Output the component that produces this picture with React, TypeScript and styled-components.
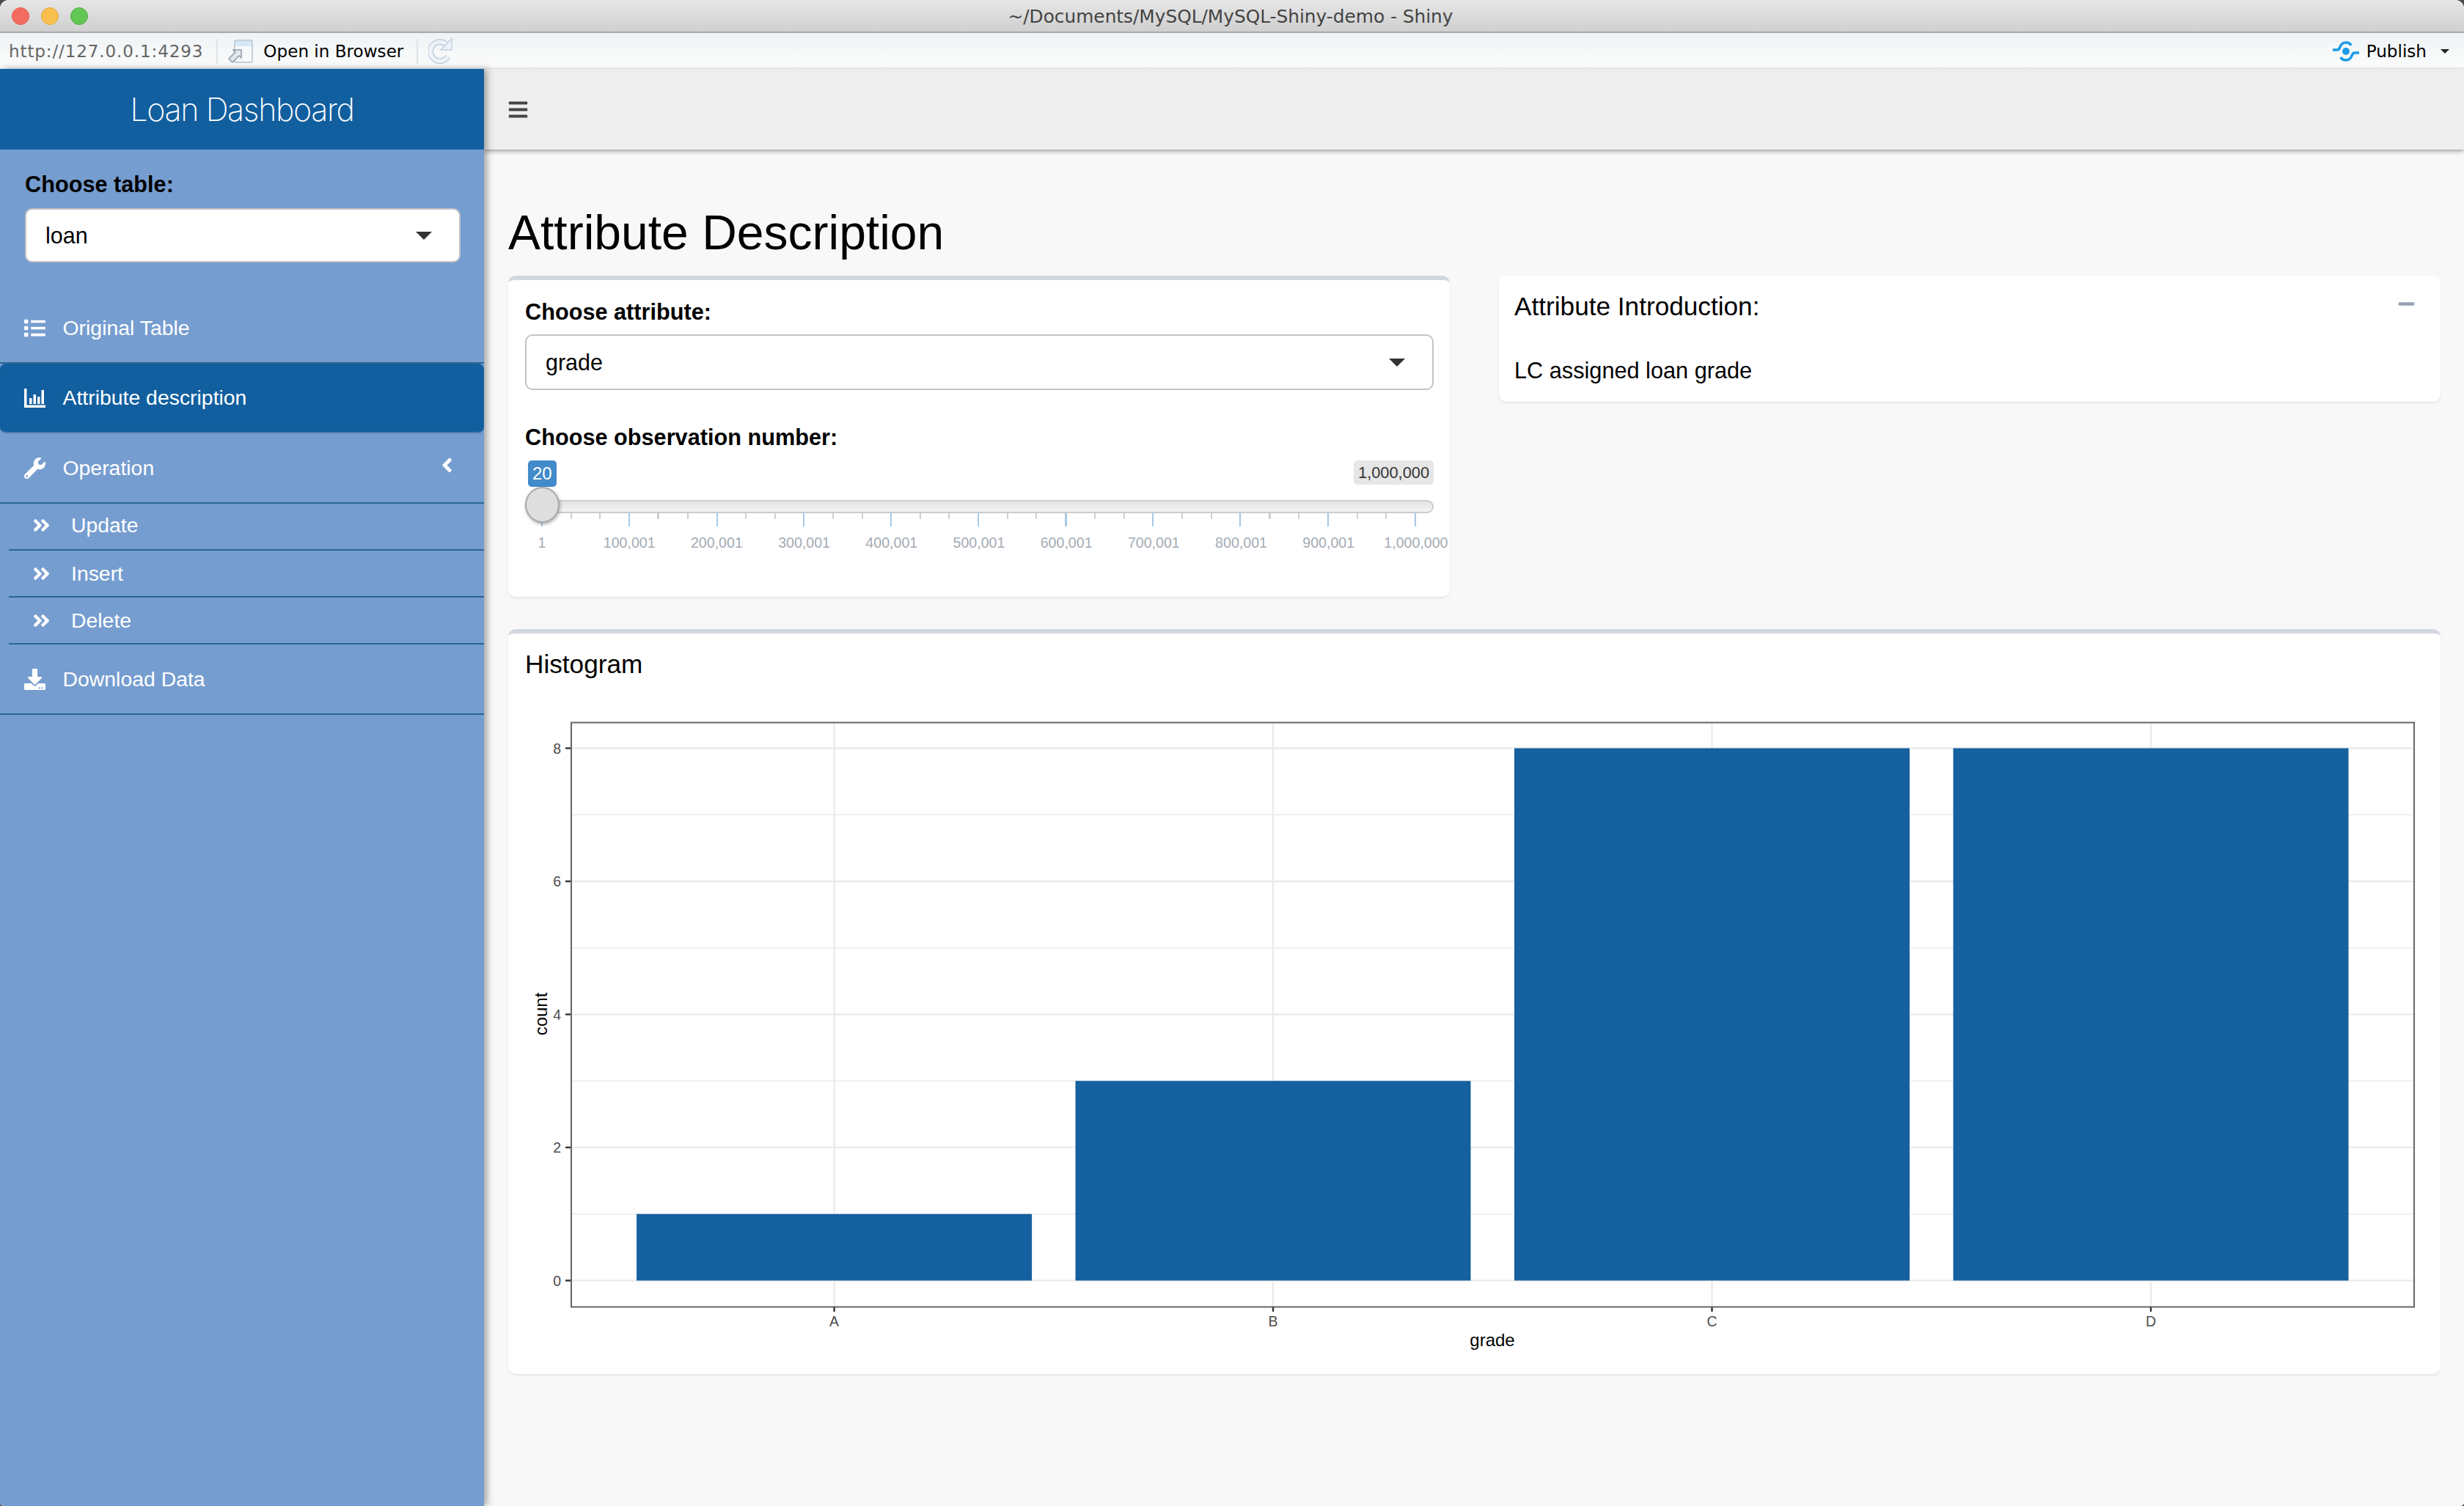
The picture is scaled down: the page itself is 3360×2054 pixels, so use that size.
import React from "react";
import styled, { createGlobalStyle } from "styled-components";
import {
  FaAngleDoubleRight,
  FaAngleLeft,
  FaBars,
  FaDownload,
  FaList,
  FaMinus,
  FaWrench,
} from "react-icons/fa";

const GlobalStyle = createGlobalStyle`
  html, body {
    margin: 0;
    padding: 0;
    background: #4a4a4a;
  }
  * {
    box-sizing: border-box;
  }
`;

const Window = styled.div`
  width: 3360px;
  height: 2054px;
  display: flex;
  flex-direction: column;
  overflow: hidden;
  border-radius: 12px 12px 5px 5px;
  background: #f8f8f8;
  font-family: "Liberation Sans", Arial, sans-serif;
  color: #000;
`;

const TitleBar = styled.div`
  height: 45px;
  flex: none;
  position: relative;
  display: flex;
  align-items: center;
  justify-content: center;
  padding: 1px 4px 0 0;
  background: linear-gradient(#e6e6e6, #cfcfcf);
  border-bottom: 2px solid #a8a8a8;
  font-family: "DejaVu Sans", sans-serif;
  font-size: 24.8px;
  color: #444;
`;

const Lights = styled.div`
  position: absolute;
  left: 16px;
  top: 10px;
  display: flex;
  gap: 16px;
`;

const Light = styled.span<{ $fill: string; $edge: string }>`
  width: 24px;
  height: 24px;
  border-radius: 50%;
  background: ${(p) => p.$fill};
  border: 1px solid ${(p) => p.$edge};
`;

const Toolbar = styled.div`
  height: 49px;
  flex: none;
  display: flex;
  align-items: center;
  padding: 1px 20px 0 12px;
  background: linear-gradient(#eff3f5, #fbfcfc 96%, #f2f2f2);
  font-family: "DejaVu Sans", sans-serif;
  font-size: 23.1px;
`;

const UrlText = styled.span`
  color: #666;
  letter-spacing: 0.85px;
`;

const ToolDivider = styled.span`
  width: 2px;
  height: 34px;
  margin: 0 14px 0 18px;
  background: #dfe3e5;
`;

const ToolSpacer = styled.div`
  flex: 1;
`;

const PublishText = styled.span`
  margin: 0 19px 0 10px;
`;

const SmallCaret = styled.span`
  width: 0;
  height: 0;
  border-left: 6px solid transparent;
  border-right: 6px solid transparent;
  border-top: 6px solid #222;
`;

const Body = styled.div`
  flex: 1;
  display: flex;
  min-height: 0;
`;

const Sidebar = styled.aside`
  width: 660px;
  flex: none;
  position: relative;
  z-index: 3;
  background: #769dcf;
  box-shadow: 4px 0 9px rgba(0, 0, 0, 0.35);
  display: flex;
  flex-direction: column;
`;

const Brand = styled.div`
  height: 110px;
  flex: none;
  display: flex;
  align-items: center;
  justify-content: center;
  background: #125f9f;
  color: #fff;
  font-family: Inter, sans-serif;
  font-weight: 200;
  font-size: 43px;
  letter-spacing: -1.4px;
`;

const TableForm = styled.div`
  height: 197px;
  flex: none;
  padding: 31px 32px 0 34px;
`;

const FieldLabel = styled.div`
  font-weight: 700;
  font-size: 30.7px;
  line-height: 34px;
`;

const SelectBox = styled.div<{ $height: number; $gap: number }>`
  height: ${(p) => p.$height}px;
  margin-top: ${(p) => p.$gap}px;
  display: flex;
  align-items: center;
  justify-content: space-between;
  padding: 0 37px 0 26px;
  background: #fff;
  border: 2px solid #c4c4c4;
  border-radius: 10px;
  font-size: 30.5px;
`;

const SelectCaret = styled.span`
  width: 0;
  height: 0;
  border-left: 11px solid transparent;
  border-right: 11px solid transparent;
  border-top: 11px solid #333;
`;

const NavRow = styled.div<{ $active?: boolean; $height: number }>`
  height: ${(p) => p.$height}px;
  flex: none;
  display: flex;
  align-items: center;
  padding: 0 44px 0 33px;
  color: #fff;
  font-size: 28.4px;
  background: ${(p) => (p.$active ? "#125f9f" : "transparent")};
  border-radius: ${(p) => (p.$active ? "8px" : "0")};
  border-bottom: 2px solid ${(p) => (p.$active ? "#4f7ea8" : "#27688e")};
`;

const NavIcon = styled.span`
  width: 52.5px;
  flex: none;
  display: flex;
  align-items: center;
  font-size: 29px;
`;

const SubRow = styled.div<{ $lift: number }>`
  height: 64px;
  margin-left: 12px;
  flex: none;
  display: flex;
  align-items: center;
  padding: 0 0 ${(p) => p.$lift}px 31px;
  color: #fff;
  font-size: 28.4px;
  border-bottom: 2px solid #27688e;
`;

const SubIcon = styled.span`
  width: 54px;
  flex: none;
  display: flex;
  align-items: center;
  font-size: 27px;
`;

const RowSpacer = styled.span`
  flex: 1;
`;

const CollapseChevron = styled.span`
  display: flex;
  margin: -7px -9px 0 0;
  font-size: 31px;
`;

const Main = styled.main`
  flex: 1;
  min-width: 0;
  display: flex;
  flex-direction: column;
`;

const TopNav = styled.div`
  height: 110px;
  flex: none;
  position: relative;
  z-index: 2;
  display: flex;
  align-items: center;
  padding-left: 32px;
  background: #eee;
  color: #444;
  font-size: 29px;
  box-shadow: 0 2px 6px rgba(0, 0, 0, 0.4);
`;

const Content = styled.div`
  flex: 1;
  padding: 77px 32px 0 33px;
  background: #f8f8f8;
`;

const PageTitle = styled.h1`
  margin: 0 0 23px;
  font-weight: 400;
  font-size: 66px;
  line-height: 72px;
`;

const TopGrid = styled.div`
  display: grid;
  grid-template-columns: 1284px 1284px;
  column-gap: 67px;
  align-items: start;
  margin-bottom: 44px;
`;

const Card = styled.section<{ $topBorder?: boolean; $height: number }>`
  height: ${(p) => p.$height}px;
  background: #fff;
  border-radius: 10px;
  border-top: ${(p) => (p.$topBorder ? "6px solid #d2d6de" : "0")};
  box-shadow: 0 2px 3px rgba(0, 0, 0, 0.08);
`;

const AttributeBody = styled.div`
  padding: 27px 22px 0 23px;
`;

const ObservationLabel = styled(FieldLabel)`
  margin-top: 48px;
`;

const Slider = styled.div`
  position: relative;
  margin-top: 14px;
  width: 1239px;
`;

const BadgeRow = styled.div`
  height: 54px;
  display: flex;
  justify-content: space-between;
  align-items: flex-start;
  padding-left: 4px;
`;

const Badge = styled.span<{ $primary?: boolean }>`
  height: ${(p) => (p.$primary ? 36 : 33)}px;
  display: flex;
  align-items: center;
  padding: 0 6px;
  border-radius: 5px;
  font-size: ${(p) => (p.$primary ? 24 : 21.8)}px;
  color: ${(p) => (p.$primary ? "#fff" : "#333")};
  background: ${(p) => (p.$primary ? "#428bca" : "#e6e6e6")};
`;

const Track = styled.div`
  height: 18px;
  border: 2px solid #ccc;
  border-radius: 9px;
  background: linear-gradient(#e4e4e4, #f4f4f4);
`;

const Handle = styled.span`
  position: absolute;
  left: 0;
  top: 36px;
  width: 47px;
  height: 49px;
  border-radius: 50%;
  background: #dedede;
  border: 2px solid #ababab;
  box-shadow: 1px 2px 4px rgba(0, 0, 0, 0.3);
`;

const TickRow = styled.div`
  height: 18px;
  display: flex;
  justify-content: space-between;
  padding: 0 24px 0 22px;
`;

const Tick = styled.span<{ $major: boolean; $thick: boolean }>`
  width: ${(p) => (p.$thick ? 3 : 2)}px;
  height: ${(p) => (p.$major ? 18 : 8)}px;
  background: ${(p) => (p.$major ? "#a6c8e6" : "#cfcfcf")};
`;

const TickLabels = styled.div`
  margin-top: 10px;
  display: flex;
  justify-content: space-between;
  padding: 0 24px 0 23px;
`;

const TickLabel = styled.span`
  width: 0;
  display: flex;
  justify-content: center;
  white-space: nowrap;
  font-size: 19.6px;
  line-height: 24px;
  color: #a3abb3;
`;

const IntroHead = styled.div`
  display: flex;
  justify-content: space-between;
  padding: 22px 34px 0 21px;
`;

const BoxTitle = styled.h3`
  margin: 0;
  font-weight: 400;
  font-size: 35.2px;
  line-height: 40px;
`;

const CollapseIcon = styled.span`
  display: flex;
  font-size: 25px;
  color: #97a0b3;
  margin-top: 4px;
`;

const IntroText = styled.p`
  margin: 48px 0 0 21px;
  font-size: 30.7px;
  line-height: 40px;
`;

const HistogramTitle = styled(BoxTitle)`
  padding: 22px 0 0 23px;
`;

const ChartFrame = styled.svg`
  display: block;
  margin-top: 24px;
  margin-left: 23px;
`;

const StatsIcon = () => (
  <svg width="29" height="26" viewBox="0 0 29 26" fill="#fff">
    <path d="M0 0h3.500v22.500H29V26H0z" />
    <rect x="7" y="13" width="3.5" height="8" />
    <rect x="12.5" y="8" width="3.5" height="13" />
    <rect x="18" y="11" width="3.5" height="10" />
    <rect x="23.5" y="2" width="3.5" height="19" />
  </svg>
);

const BrowserIcon = () => (
  <svg width="34" height="34" viewBox="0 0 34 34" style={{ marginRight: 14 }}>
    <rect x="9" y="2" width="24" height="30" rx="2" fill="#f7fafc" stroke="#b6c2cc" strokeWidth="1.5" />
    <rect x="10" y="3" width="22" height="7" fill="#d5e8f8" />
    <path d="M1 27l9-9-3-3h11v11l-3-3-9 9z" fill="#e4e9ee" stroke="#8d9aa6" strokeWidth="1.5" />
  </svg>
);

const RefreshIcon = () => (
  <svg width="34" height="38" viewBox="0 0 34 38" fill="none">
    <path d="M27 26a13 13 0 1 1-1-15" stroke="#c3cfe0" strokeWidth="8" />
    <path d="M27 26a13 13 0 1 1-1-15" stroke="#eef3f9" strokeWidth="5" />
    <path d="M32 2v15H17z" fill="#eef3f9" stroke="#c3cfe0" strokeWidth="1.5" />
  </svg>
);

const PublishIcon = () => (
  <svg width="36" height="28" viewBox="0 0 36 28" fill="none" stroke="#1a9be6" strokeWidth="3.6">
    <circle cx="18" cy="14" r="5" fill="#1a9be6" stroke="none" />
    <path d="M0 12h6c2 0 3-1 4-4 1-3 4-6 8-6 3 0 6 1.500 7 4" />
    <path d="M36 16h-6c-2 0-3 1-4 4-1 3-4 6-8 6-3 0-6-1.500-7-4" />
  </svg>
);

const sliderLabels = [
  "1",
  "100,001",
  "200,001",
  "300,001",
  "400,001",
  "500,001",
  "600,001",
  "700,001",
  "800,001",
  "900,001",
  "1,000,000",
];

const tickIndexes = Array.from({ length: 31 }, (_, i) => i);

const bars = [
  { label: "A", count: 1, x: 1137.6 },
  { label: "B", count: 3, x: 1736 },
  { label: "C", count: 8, x: 2334.5 },
  { label: "D", count: 8, x: 2933 },
];

const zeroY = 1746.5;
const unitY = 90.75;

const Histogram = () => (
  <ChartFrame width="2590" height="900" viewBox="716 950 2590 900" fontFamily="Liberation Sans, Arial, sans-serif">
    <rect x="779" y="985" width="2513" height="797" fill="#fff" />
    {[0, 1, 2, 3, 4, 5, 6, 7, 8].map((v) => (
      <line
        key={v}
        x1="779"
        x2="3292"
        y1={zeroY - v * unitY}
        y2={zeroY - v * unitY}
        stroke="#ebebeb"
        strokeWidth={v % 2 === 0 ? 2.6 : 1.4}
      />
    ))}
    {bars.map((b) => (
      <line key={b.label} x1={b.x} x2={b.x} y1="985" y2="1782" stroke="#ebebeb" strokeWidth="2.4" />
    ))}
    {bars.map((b) => (
      <rect
        key={b.label}
        x={b.x - 269.5}
        y={zeroY - b.count * unitY}
        width="539"
        height={b.count * unitY}
        fill="#15609f"
      />
    ))}
    <rect x="779" y="985.5" width="2513" height="797" fill="none" stroke="#666" strokeWidth="2" />
    {[0, 2, 4, 6, 8].map((v) => (
      <g key={v}>
        <line x1="771" x2="778" y1={zeroY - v * unitY} y2={zeroY - v * unitY} stroke="#333" strokeWidth="2.4" />
        <text x="765" y={zeroY - v * unitY + 7} textAnchor="end" fontSize="19.5" fill="#4d4d4d">
          {v}
        </text>
      </g>
    ))}
    {bars.map((b) => (
      <g key={b.label}>
        <line x1={b.x} x2={b.x} y1="1783" y2="1789" stroke="#333" strokeWidth="2.4" />
        <text x={b.x} y="1809" textAnchor="middle" fontSize="19.5" fill="#4d4d4d">
          {b.label}
        </text>
      </g>
    ))}
    <text x="2035" y="1836" textAnchor="middle" fontSize="24" fill="#000">
      grade
    </text>
    <text textAnchor="middle" fontSize="24" fill="#000" transform="translate(746 1383) rotate(-90)">
      count
    </text>
  </ChartFrame>
);

export default function App() {
  return (
    <>
      <GlobalStyle />
      <Window>
        <TitleBar>
          <Lights>
            <Light $fill="#f46c60" $edge="#e2574c" />
            <Light $fill="#f9bf4e" $edge="#e2a73c" />
            <Light $fill="#62c755" $edge="#53ab46" />
          </Lights>
          ~/Documents/MySQL/MySQL-Shiny-demo - Shiny
        </TitleBar>
        <Toolbar>
          <UrlText>http://127.0.0.1:4293</UrlText>
          <ToolDivider />
          <BrowserIcon />
          <span>Open in Browser</span>
          <ToolDivider />
          <RefreshIcon />
          <ToolSpacer />
          <PublishIcon />
          <PublishText>Publish</PublishText>
          <SmallCaret />
        </Toolbar>
        <Body>
          <Sidebar>
            <Brand>Loan Dashboard</Brand>
            <TableForm>
              <FieldLabel>Choose table:</FieldLabel>
              <SelectBox $height={74} $gap={15}>
                loan
                <SelectCaret />
              </SelectBox>
            </TableForm>
            <NavRow $height={95}>
              <NavIcon>
                <FaList />
              </NavIcon>
              Original Table
            </NavRow>
            <NavRow $active $height={95}>
              <NavIcon>
                <StatsIcon />
              </NavIcon>
              Attribute description
            </NavRow>
            <NavRow $height={96}>
              <NavIcon>
                <FaWrench />
              </NavIcon>
              Operation
              <RowSpacer />
              <CollapseChevron>
                <FaAngleLeft />
              </CollapseChevron>
            </NavRow>
            <SubRow $lift={3}>
              <SubIcon>
                <FaAngleDoubleRight />
              </SubIcon>
              Update
            </SubRow>
            <SubRow $lift={0}>
              <SubIcon>
                <FaAngleDoubleRight />
              </SubIcon>
              Insert
            </SubRow>
            <SubRow $lift={0}>
              <SubIcon>
                <FaAngleDoubleRight />
              </SubIcon>
              Delete
            </SubRow>
            <NavRow $height={96}>
              <NavIcon>
                <FaDownload />
              </NavIcon>
              Download Data
            </NavRow>
          </Sidebar>
          <Main>
            <TopNav>
              <FaBars />
            </TopNav>
            <Content>
              <PageTitle>Attribute Description</PageTitle>
              <TopGrid>
                <Card $topBorder $height={438}>
                  <AttributeBody>
                    <FieldLabel>Choose attribute:</FieldLabel>
                    <SelectBox $height={76} $gap={13}>
                      grade
                      <SelectCaret />
                    </SelectBox>
                    <ObservationLabel>Choose observation number:</ObservationLabel>
                    <Slider>
                      <BadgeRow>
                        <Badge $primary>20</Badge>
                        <Badge>1,000,000</Badge>
                      </BadgeRow>
                      <Track />
                      <Handle />
                      <TickRow>
                        {tickIndexes.map((i) => (
                          <Tick key={i} $major={i % 3 === 0} $thick={i === 18 || i === 4 || i === 25} />
                        ))}
                      </TickRow>
                      <TickLabels>
                        {sliderLabels.map((l) => (
                          <TickLabel key={l}>{l}</TickLabel>
                        ))}
                      </TickLabels>
                    </Slider>
                  </AttributeBody>
                </Card>
                <Card $height={172}>
                  <IntroHead>
                    <BoxTitle>Attribute Introduction:</BoxTitle>
                    <CollapseIcon>
                      <FaMinus />
                    </CollapseIcon>
                  </IntroHead>
                  <IntroText>LC assigned loan grade</IntroText>
                </Card>
              </TopGrid>
              <Card $topBorder $height={1016}>
                <HistogramTitle>Histogram</HistogramTitle>
                <Histogram />
              </Card>
            </Content>
          </Main>
        </Body>
      </Window>
    </>
  );
}
